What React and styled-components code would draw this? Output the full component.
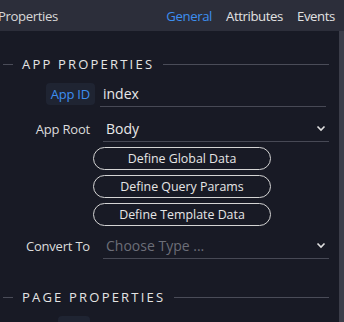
import React from 'react';
import styled, { createGlobalStyle } from 'styled-components';

const GlobalStyle = createGlobalStyle`
  html, body {
    margin: 0;
    padding: 0;
    background: #181a25;
    font-family: 'Open Sans', 'Noto Sans', sans-serif;
    overflow: hidden;
  }
`;

const Panel = styled.div`
  width: 344px;
  height: 322px;
  display: flex;
  flex-direction: column;
  background: #181a25;
  color: #dcdcdc;
  overflow: hidden;
`;

const Header = styled.div`
  height: 31px;
  flex-shrink: 0;
  display: flex;
  align-items: center;
  justify-content: space-between;
  background: #2c2e3a;
  padding: 0 9px 0 0;
  font-size: 13.2px;
  letter-spacing: -0.4px;
`;

const Title = styled.div`
  margin-left: -2px;
  color: #d8d8d8;
`;

const Tabs = styled.div`
  display: flex;
  gap: 14px;
`;

const Tab = styled.div`
  color: ${({ active }) => (active ? '#3d8ef0' : '#e2e2e2')};
`;

const Body = styled.div`
  flex: 1;
  display: flex;
  min-height: 0;
`;

const Content = styled.div`
  flex: 1;
  min-width: 0;
  padding: 24px 10px 0 3px;
`;

const ScrollTrack = styled.div`
  width: 5px;
  background: #3b3d49;
`;

const SectionTitle = styled.div`
  display: flex;
  align-items: center;
  gap: 9px;
  font-size: 13px;
  letter-spacing: 2.2px;
  color: #e4e4e4;
  margin-bottom: ${({ gapBelow }) => gapBelow || 0}px;

  &::before {
    content: '';
    width: 10px;
    border-top: 1px solid #4a4c58;
  }
  &::after {
    content: '';
    flex: 1;
    border-top: 1px solid #4a4c58;
  }
`;

const Form = styled.div`
  display: grid;
  grid-template-columns: 92px 1fr;
  column-gap: 5px;
  align-items: center;
`;

const Label = styled.div`
  justify-self: end;
  font-size: 13px;
  letter-spacing: -0.2px;
  line-height: 22px;
  padding: 0 5px;
  border-radius: 4px;
  color: ${({ active }) => (active ? '#3d8ef0' : '#dcdcdc')};
  background: ${({ active }) => (active ? '#1f2432' : 'transparent')};
`;

const Field = styled.div`
  display: flex;
  align-items: center;
  justify-content: space-between;
  height: 26px;
  margin: ${({ select }) => (select ? '0 0 0 3px' : '0 3px 0 0')};
  padding: 0 3px 0 3px;
  border-bottom: 1px solid #474955;
  font-size: 14px;
  color: ${({ placeholder }) => (placeholder ? '#6c6e78' : '#e8e8e8')};
`;

const Chevron = () => (
  <svg width="10" height="7" viewBox="0 0 10 7">
    <path d="M1.5 1.5 L5 5 L8.5 1.5" fill="none" stroke="#e0e0e0" strokeWidth="1.6" />
  </svg>
);

const Buttons = styled.div`
  grid-column: 2;
  display: flex;
  flex-direction: column;
  gap: 5px;
  margin: 5px 0 0 -7px;
  width: 178px;
`;

const PillButton = styled.button`
  height: 23px;
  border: 1px solid #d4d4d4;
  border-radius: 12px;
  background: transparent;
  color: #e6e6e6;
  font-family: inherit;
  font-size: 12.4px;
  padding: 0;
`;

const Spacer = styled.div`
  grid-column: 1 / -1;
  height: ${({ h }) => h}px;
`;

const PageRow = styled.div`
  display: flex;
  align-items: flex-start;
  gap: 7px;
  margin-left: 55px;
`;

const Thumb = styled.div`
  flex-shrink: 0;
  width: 32px;
  height: 20px;
  border-radius: 4px;
  background: #1f2432;
`;

const PageName = styled.div`
  flex: 1;
  min-width: 0;
  overflow: hidden;
  margin-top: 3px;
  font-size: 14px;
  color: #e0e0e0;
  white-space: nowrap;
`;

const PageBadge = styled.div`
  flex-shrink: 0;
  width: 12px;
  height: 12px;
  margin: 6px 6px 0 4px;
  border-radius: 2px;
  background: #4f7a48;
`;

const App = () => (
  <Panel>
    <GlobalStyle />
    <Header>
      <Title>Properties</Title>
      <Tabs>
        <Tab active>General</Tab>
        <Tab>Attributes</Tab>
        <Tab>Events</Tab>
      </Tabs>
    </Header>
    <Body>
      <Content>
        <SectionTitle gapBelow={7}>APP PROPERTIES</SectionTitle>
        <Form>
          <Label active>App ID</Label>
          <Field>index</Field>
          <Spacer h={8} />
          <Label>App Root</Label>
          <Field select>
            Body
            <Chevron />
          </Field>
          <Buttons>
            <PillButton>Define Global Data</PillButton>
            <PillButton>Define Query Params</PillButton>
            <PillButton>Define Template Data</PillButton>
          </Buttons>
          <Spacer h={6} />
          <Label>Convert To</Label>
          <Field select placeholder="true">
            Choose Type ...
            <Chevron />
          </Field>
        </Form>
        <Spacer h={29} />
        <SectionTitle gapBelow={10}>PAGE PROPERTIES</SectionTitle>
        <PageRow>
          <Thumb />
          <PageName>Routing - Hot Accounts &amp; Exclusive</PageName>
          <PageBadge />
        </PageRow>
      </Content>
      <ScrollTrack />
    </Body>
  </Panel>
);

export default App;
